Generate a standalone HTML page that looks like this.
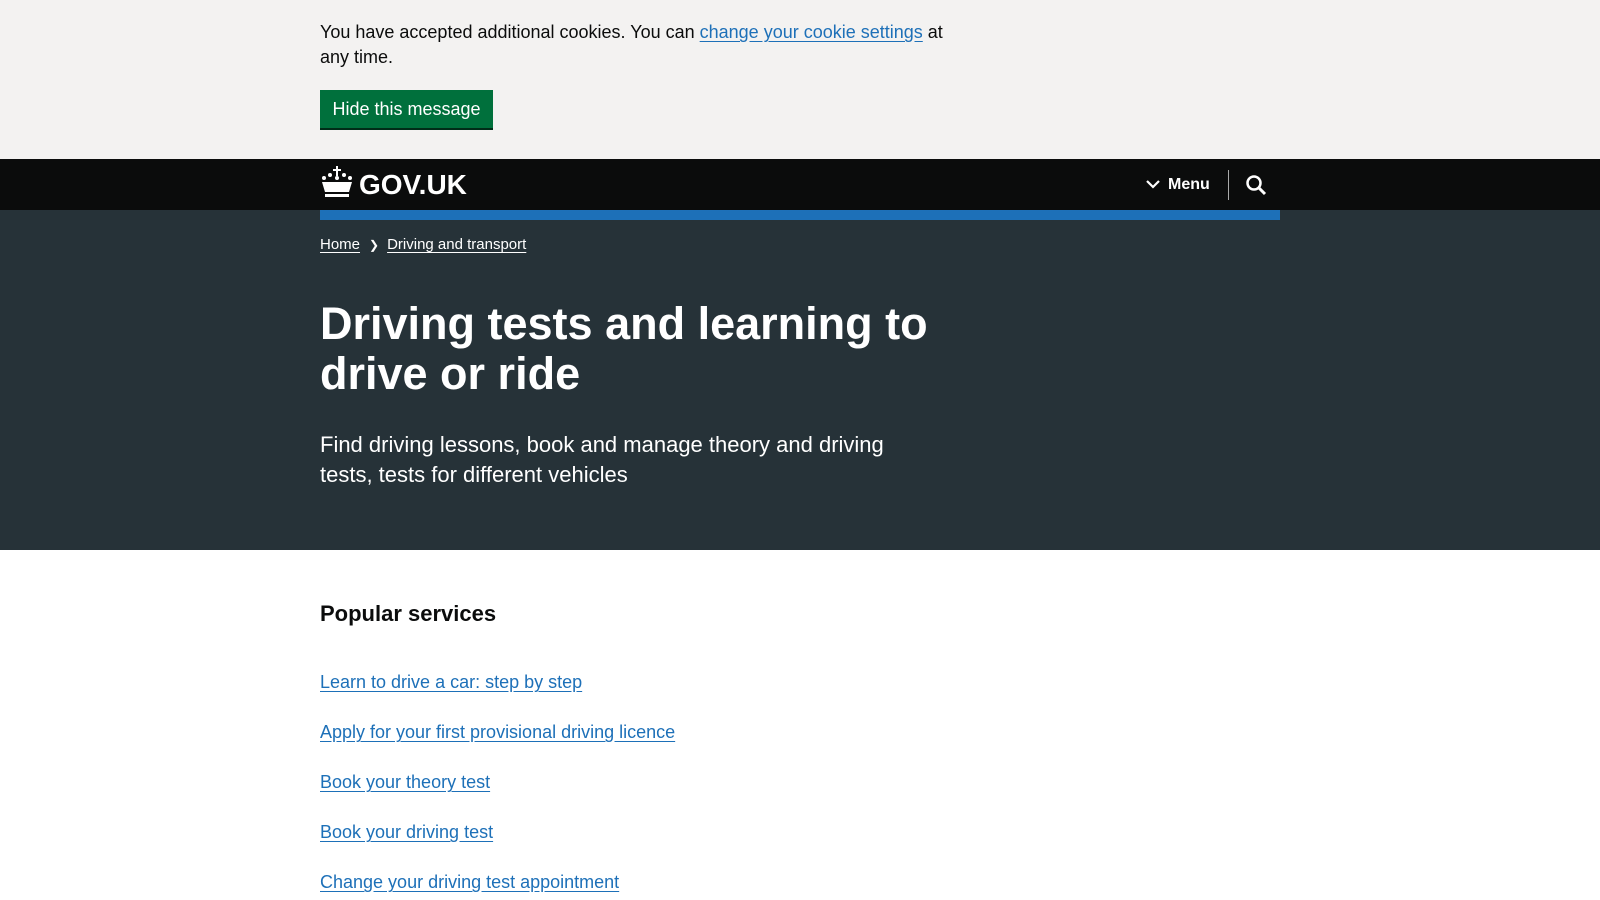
<!DOCTYPE html>
<html><head><meta charset="utf-8"><style>
body{margin:0;font-family:"Liberation Sans",sans-serif;background:#fff;color:#0b0c0c}
.w{position:absolute;left:320px}
a{color:#1d70b8;text-underline-offset:3px}
</style></head><body>
<div style="position:absolute;top:0;left:0;width:1600px;height:159px;background:#f3f2f1"></div>
<div class="w" style="top:20px;width:645px;font-size:18px;line-height:25px">You have accepted additional cookies. You can <a href="#">change your cookie settings</a> at any time.</div>
<div class="w" style="top:90px;width:173px;height:38px;background:#00703c;box-shadow:0 2px 0 #002d18;color:#fff;font-size:18px;line-height:38px;text-align:center">Hide this message</div>
<div style="position:absolute;top:159px;left:0;width:1600px;height:51px;background:#0b0c0c"></div>
<svg class="w" style="top:166px" width="34" height="32" viewBox="0 0 34 32" fill="#fff"><rect x="16" y="0" width="2" height="10"/><rect x="13" y="3" width="8" height="2"/><circle cx="4" cy="12" r="2"/><circle cx="10" cy="9" r="2"/><circle cx="24" cy="9" r="2"/><circle cx="30" cy="12" r="2"/><circle cx="17" cy="12" r="2"/><path d="M2 16 L32 16 L29 26 L5 26 Z"/><rect x="5" y="28" width="24" height="3"/></svg>
<div class="w" style="left:359px;top:167px;color:#fff;font-weight:bold;font-size:28px;line-height:36px">GOV.UK</div>
<svg style="position:absolute;left:1146px;top:179px" width="14" height="10" viewBox="0 0 14 10"><path d="M1 2 L7 8 L13 2" stroke="#fff" stroke-width="2.2" fill="none"/></svg>
<div style="position:absolute;left:1168px;top:173px;color:#fff;font-weight:bold;font-size:16px;line-height:24px">Menu</div>
<div style="position:absolute;left:1228px;top:170px;width:1px;height:30px;background:#aaa"></div>
<svg style="position:absolute;left:1245px;top:174px" width="22" height="22" viewBox="0 0 22 22"><circle cx="9" cy="9" r="6.5" stroke="#fff" stroke-width="2.5" fill="none"/><path d="M13.5 13.5 L20 20" stroke="#fff" stroke-width="3"/></svg>
<div style="position:absolute;top:210px;left:0;width:1600px;height:340px;background:#263238"></div>
<div class="w" style="top:210px;width:960px;height:10px;background:#1d70b8"></div>
<div class="w" style="top:234px;color:#fff;font-size:15px;line-height:22px"><a href="#" style="color:#fff">Home</a><span style="margin:0 8px 0 9px;font-size:12px">&#x276F;</span><a href="#" style="color:#fff">Driving and transport</a></div>
<div class="w" style="top:299px;width:660px;color:#fff;font-weight:bold;font-size:45px;line-height:50px">Driving tests and learning to drive or ride</div>
<div class="w" style="top:430px;width:610px;color:#fff;font-size:22px;line-height:30px">Find driving lessons, book and manage theory and driving tests, tests for different vehicles</div>
<div class="w" style="top:599px;font-weight:bold;font-size:22px;line-height:30px">Popular services</div>
<div class="w" style="top:670px;font-size:18px;line-height:25px">
<div style="margin-bottom:25px"><a href="#">Learn to drive a car: step by step</a></div>
<div style="margin-bottom:25px"><a href="#">Apply for your first provisional driving licence</a></div>
<div style="margin-bottom:25px"><a href="#">Book your theory test</a></div>
<div style="margin-bottom:25px"><a href="#">Book your driving test</a></div>
<div><a href="#">Change your driving test appointment</a></div>
</div>
</body></html>
